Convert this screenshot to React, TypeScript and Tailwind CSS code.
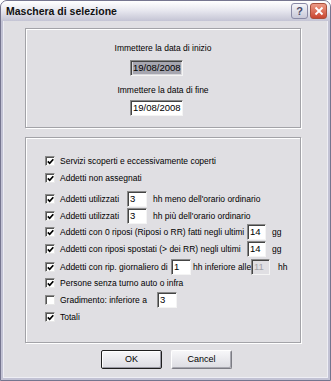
import type { ReactNode } from 'react'

const font = { fontFamily: '"Liberation Sans", Arial, sans-serif' }

function Check({ checked = true }: { checked?: boolean }) {
  return (
    <div className="w-[10px] h-[10px] shrink-0 bg-white border border-t-[#8a8a8a] border-l-[#8a8a8a] border-b-[#e8e8e8] border-r-[#e8e8e8] shadow-[inset_1px_1px_0_#555] flex items-center justify-center">
      {checked && (
        <svg width="7" height="7" viewBox="0 0 7 7">
          <path d="M0.8 3.4 L2.7 5.3 L6.3 1.2" fill="none" stroke="#000" strokeWidth="1.7" />
        </svg>
      )}
    </div>
  )
}

function Field({ value, w, disabled = false }: { value: string; w: string; disabled?: boolean }) {
  return (
    <div
      className={`${w} h-[16px] shrink-0 border border-t-[#8a8a8a] border-l-[#8a8a8a] border-b-[#f4f4f4] border-r-[#f4f4f4] shadow-[inset_1px_1px_0_#444] pl-[2px] flex items-center text-[9.5px] leading-none ${
        disabled ? 'bg-[#e0dfe3] text-[#a3a3a8]' : 'bg-white text-black'
      }`}
    >
      {value}
    </div>
  )
}

function Row({ checked = true, className, children }: { checked?: boolean; className: string; children: ReactNode }) {
  return (
    <div className={`flex items-center h-[16px] ${className}`}>
      <Check checked={checked} />
      <div className="ml-[5px] flex items-center whitespace-nowrap">{children}</div>
    </div>
  )
}

export default function App() {
  return (
    <div className="w-[331px] h-[381px] text-black text-[8.5px] leading-[10px]" style={font}>
      <div className="w-full h-full rounded-t-[7px] border border-[#75758f] bg-[#c2c2d4] flex flex-col overflow-hidden">
        {/* Title bar */}
        <div className="h-[20px] shrink-0 bg-gradient-to-b from-[#ffffff] via-[#e6e6ee] to-[#c4c4d4] flex items-center pl-[5px] pr-[3px]">
          <span className="text-[10.5px] font-bold text-[#111] flex-1">Maschera di selezione</span>
          <div className="w-[17px] h-[16px] rounded-[3px] border border-[#8a8aa6] bg-gradient-to-b from-[#f6f6fa] to-[#c8c8d8] flex items-center justify-center text-[11px] font-bold text-[#4a4a68] leading-none">
            ?
          </div>
          <div className="ml-[2px] w-[17px] h-[16px] rounded-[3px] border border-[#a9503c] bg-gradient-to-b from-[#ec9a86] to-[#c9452f] flex items-center justify-center">
            <svg width="10" height="10" viewBox="0 0 10 10">
              <path d="M1.5 1.5 L8.5 8.5 M8.5 1.5 L1.5 8.5" stroke="#fff" strokeWidth="1.8" />
            </svg>
          </div>
        </div>

        {/* Body */}
        <div className="flex-1 mx-[2px] mb-[2px] border-x border-b border-[#eeeef4] bg-[#e0dfe3] flex flex-col">
          {/* Dates group */}
          <div className="mt-[7px] ml-[21px] w-[276px] h-[100px] border border-[#a3a3a8] shadow-[1px_1px_0_#ffffff,inset_1px_1px_0_#ffffff] flex flex-col pt-[14px]">
            <div className="text-center">Immettere la data di inizio</div>
            <div className="mt-[7px] ml-[104px] w-[53px] h-[16px] border border-t-[#8a8a8a] border-l-[#8a8a8a] border-b-[#f4f4f4] border-r-[#f4f4f4] shadow-[inset_1px_1px_0_#444] bg-[#d9d8dc] pl-[2px] flex items-center text-[9.5px] leading-none">
              <span className="bg-[#a6a6b0] py-[1px]">19/08/2008</span>
            </div>
            <div className="mt-[9px] text-center">Immettere la data di fine</div>
            <div className="mt-[5px] ml-[104px]">
              <Field value="19/08/2008" w="w-[53px]" />
            </div>
          </div>

          {/* Options group */}
          <div className="mt-[9px] ml-[21px] w-[276px] h-[206px] border border-[#a3a3a8] shadow-[1px_1px_0_#ffffff,inset_1px_1px_0_#ffffff] flex flex-col pt-[15px] pl-[19px]">
            <Row className="">Servizi scoperti e eccessivamente coperti</Row>
            <Row className="mt-[1px]">Addetti non assegnati</Row>
            <Row className="mt-[5px]">
              <span className="w-[67px]">Addetti utilizzati</span>
              <Field value="3" w="w-[20px]" />
              <span className="ml-[6px]">hh meno dell'orario ordinario</span>
            </Row>
            <Row className="mt-[1px]">
              <span className="w-[67px]">Addetti utilizzati</span>
              <Field value="3" w="w-[20px]" />
              <span className="ml-[6px]">hh più dell'orario ordinario</span>
            </Row>
            <Row className="">
              <span className="w-[187px]">Addetti con 0 riposi (Riposi o RR) fatti negli ultimi</span>
              <Field value="14" w="w-[19px]" />
              <span className="ml-[6px]">gg</span>
            </Row>
            <Row className="mt-[1px]">
              <span className="w-[187px]">Addetti con riposi spostati (&gt; dei RR) negli ultimi</span>
              <Field value="14" w="w-[19px]" />
              <span className="ml-[6px]">gg</span>
            </Row>
            <Row className="mt-[2px]">
              <span className="w-[111px]">Addetti con rip. giornaliero di</span>
              <Field value="1" w="w-[20px]" />
              <span className="ml-[2px] w-[58px]">hh inferiore alle</span>
              <Field value="11" w="w-[19px]" disabled />
              <span className="ml-[8px]">hh</span>
            </Row>
            <Row className="">Persone senza turno auto o infra</Row>
            <Row className="mt-[1px]" checked={false}>
              <span className="w-[97px]">Gradimento: inferiore a</span>
              <Field value="3" w="w-[20px]" />
            </Row>
            <Row className="mt-[1px]">Totali</Row>
          </div>

          {/* Buttons */}
          <div className="mt-[7px] pl-[97px] flex gap-[9px]">
            <button className="w-[61px] h-[19px] rounded-[2px] border border-[#1e1e1e] bg-gradient-to-b from-[#f7f7f9] to-[#dcdce2] shadow-[inset_1px_1px_0_#ffffff,inset_-1px_-1px_0_#9a9aa4] text-[9px] leading-none">
              OK
            </button>
            <button className="w-[61px] h-[19px] rounded-[2px] border border-t-[#ffffff] border-l-[#ffffff] border-b-[#7c7c84] border-r-[#7c7c84] bg-gradient-to-b from-[#f7f7f9] to-[#dcdce2] shadow-[inset_-1px_-1px_0_#a8a8b0] text-[9px] leading-none">
              Cancel
            </button>
          </div>
        </div>
      </div>
    </div>
  )
}
